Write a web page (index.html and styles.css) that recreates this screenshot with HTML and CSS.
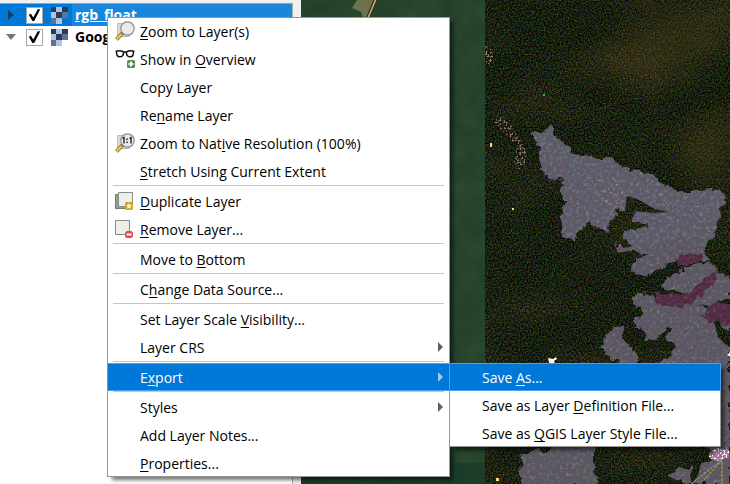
FILE: index.html
```html
<!DOCTYPE html>
<html lang="en">
<head>
<meta charset="utf-8">
<title>Layers</title>
<link rel="stylesheet" href="styles.css">
</head>
<body>
<svg class="defs" width="0" height="0" aria-hidden="true">
  <symbol id="raster" viewBox="0 0 17 17">
    <path fill="#aac4e2" d="M0 0h17v11h-6v6H0z"/>
    <path fill="#2a3c55" d="M11 0h6v5h-6zM5 5h6v6H5zM0 0h5v5H0z"/>
    <path fill="#5d7490" d="M11 5h6v6h-6zM0 11h5v6H0z"/>
  </symbol>
  <symbol id="lens" viewBox="0 0 20 20">
    <path fill="#dcdcdc" stroke="#bcbcbc" d="M2.500 2.500h12v13h-12z"/>
    <path stroke="#8a6d1d" stroke-width="4" d="M1.500 18.500l6-6.500"/>
    <path stroke="#f3c944" stroke-width="2.400" d="M1.500 18.500l5.500-6"/>
    <path stroke="#555" stroke-width="2" d="M6.500 13l2-2"/>
    <circle cx="12.500" cy="7.500" r="6.700" fill="#e9ebea" stroke="#8d8d8d" stroke-width="1.200"/>
  </symbol>
</svg>
<main class="app">
  <section class="panel" aria-label="Layers">
    <ul class="tree">
      <li class="layer selected">
        <span class="arrow closed"></span>
        <input type="checkbox" id="l1" checked>
        <svg class="thumb" aria-hidden="true"><use href="#raster"/></svg>
        <label for="l1">rgb_float</label>
      </li>
      <li class="layer">
        <span class="arrow open"></span>
        <input type="checkbox" id="l2" checked>
        <svg class="thumb" aria-hidden="true"><use href="#raster"/></svg>
        <label for="l2">Google</label>
      </li>
    </ul>
  </section>

  <svg class="map" viewBox="301 0 429 484" preserveAspectRatio="xMinYMin slice" role="img" aria-label="Satellite map">
    <defs>
      <filter id="forest" x="0" y="0" width="1" height="1" color-interpolation-filters="sRGB">
        <feTurbulence type="fractalNoise" baseFrequency=".63" numOctaves="2" seed="4"/>
        <feColorMatrix values=".45 .15 0 0 -.21  .15 .55 0 0 -.23  .1 .1 .35 0 -.215  0 0 0 0 1" result="fine"/>
        <feTurbulence type="fractalNoise" baseFrequency=".012 .02" numOctaves="3" seed="8"/>
        <feColorMatrix values=".16 0 0 0 -.07  .08 0 0 0 -.03  .04 0 0 0 -.015  0 0 0 0 1"/>
        <feComposite in2="fine" operator="arithmetic" k2="1" k3="1" result="trees"/>
        <feComposite in="trees" in2="SourceGraphic" operator="in"/>
      </filter>
      <filter id="rock" filterUnits="userSpaceOnUse" x="485" y="100" width="1400" height="1100" color-interpolation-filters="sRGB">
        <feTurbulence type="fractalNoise" baseFrequency=".13" numOctaves="3" seed="3" result="edge"/>
        <feDisplacementMap in="SourceGraphic" in2="edge" scale="10" xChannelSelector="R" yChannelSelector="G" result="shape"/>
        <feTurbulence type="fractalNoise" baseFrequency=".3" numOctaves="3" seed="12"/>
        <feColorMatrix values=".4 .1 0 0 -.26  .1 .4 0 0 -.25  .1 .1 .3 0 -.25  0 0 0 0 1" result="g"/>
        <feComposite in="shape" in2="g" operator="arithmetic" k2="1" k3="1" result="lit"/>
        <feComposite in="lit" in2="shape" operator="in"/>
      </filter>
      <filter id="speckle" x="-.1" y="-.1" width="1.200" height="1.200">
        <feTurbulence type="fractalNoise" baseFrequency=".5" numOctaves="2" seed="9"/>
        <feColorMatrix values="0 0 0 0 0  0 0 0 0 0  0 0 0 0 0  9 0 0 0 -4.600" result="dots"/>
        <feComposite in="SourceGraphic" in2="dots" operator="in"/>
      </filter>
      <filter id="soft" x="-.5" y="-.5" width="2" height="2"><feGaussianBlur stdDeviation="14"/></filter>
      <filter id="mist" x="0" y="0" width="1" height="1" color-interpolation-filters="sRGB">
        <feTurbulence type="fractalNoise" baseFrequency=".05" numOctaves="4" seed="2"/>
        <feColorMatrix values=".06 0 0 0 .12  .06 0 0 0 .235  .05 0 0 0 .15  0 0 0 0 1"/>
      </filter>
    </defs>
    <path filter="url(#mist)" d="M301 0h184v484H301z"/>
    <path fill="#17382a" opacity=".6" d="M301 463h184v21H301z"/>
    <path fill="#8a8558" opacity=".7" d="M357 0l-5 8 9 4 2 5h7l6-17z"/>
    <path fill="none" stroke="#332d18" stroke-width="4" d="M376-1l-8 19"/>
    <path fill="none" stroke="#c9b983" stroke-width="1.500" d="M376-1l-8 19"/>

    <path filter="url(#forest)" d="M485 0h1400v1200H485z"/>
    <g filter="url(#soft)" fill="#59461e" opacity=".35">
      <path d="M580 75l70-65 80-10v50l-70 30zM680 140l50-30v60l-40 15z"/>
    </g>
    <g filter="url(#speckle)" fill="#a98675">
      <path d="M485 46l6 2 3 14-6 2-3-4z"/>
      <path opacity=".8" d="M493 121l8-4 10 8 10 14 6 14-3 13-6 5-5-12 4-12-14-15z"/>
    </g>

    <g filter="url(#rock)">
      <g fill="#5c5967">
        <path transform="translate(480 0) scale(.3333)" d="M160 400l25-5 25-17 15 16 0 20 37 14 10 30 35 10 35 6 45-5 50 34 40 10 45 10 40 38 45 15 115-12 12 35-16 55-10 52-20 20 0 55-210-20-25-25-25-25 25-28 85 4-85-28-38-28-15 30-18 35-35-20-20-5-30 28-12 22-40-10 0-90 12-15-17-30 5-42-32 10-30-30 0-45z"/>
        <path d="M640 236l20-26 55-5-8 40-25 4z"/>
      </g>
      <g fill="#5a5560">
        <path d="M613 245l25 2 30-8 36-2 4 10-6 8-16 2-20 9-18 10-15-2-3-9 8-7 20-7-22 0-14 1z"/>
        <path d="M661 287l10-12 16-8 18-6 12 3 3 10 10 4v20l-16 8-24-4-8-10z"/>
        <path d="M633 296l12-4 12 5 34 0 12 10 27 8v169h-42l-22-8 18-11 26-2 5-10-28-14-40-14h-9l-10-45-10-18-13-8-4-6 5-13 6-8h12l-2 11 13 13 4 13 12 3 16-9 9-10-10-10 5-10-9 4-7 9-9-2-6-9-7-6 8-11z"/>
        <path d="M522 455l14-7 12 5 8-14 40 6-2 20 4 20h-78z"/>
      </g>
      <g fill="#502a41">
        <path transform="translate(480 242) scale(.3333)" d="M585 45l35-8 55 0-20 25-60 15zM525 150l50 5 60-5 30-35 50-35-10 40-30 30-40 40-40 5-70-8zM665 215l25-30 80 0v60l-40 5-70-25z"/>
      </g>
    </g>
    <g filter="url(#speckle)" fill="none" stroke="#b0807b" stroke-width="2">
      <path d="M594 177l12 8 12 17-9 15M588 188l12 8 10 8M607 170l18 26M612 187l8 18"/>
    </g>
    <g filter="url(#speckle)" fill="none" stroke="#9b9dad" opacity=".5">
      <path d="M540 136l28 45 22 36M546 144l34 20 30 45M565 160l40 40M580 160l48 38 55 25M605 162l50 35 55 20M640 228l60 8M615 173l60 35 40-3M650 265l50-10M668 290l40-15M650 350l60 10M690 320l35 20M550 460l30 15M560 480l20-20"/>
    </g>
    <g filter="url(#forest)">
      <path d="M627 196l10 3 18 10 14 3-16 1-17-2-5 10-8 3z"/>
      <path d="M708 240l22-3v38l-12-2-1-10-9-5-4-6z"/>
      <path d="M714 322l4 15 8 8 4 2v-16l-8-3-3-9z"/>
      <path d="M600 446h42l30 4 20 14-2 6-28-7-10 9-10 12h-42z"/>
      <path d="M697 457l12-4 0 5-8 5-3 12-6 9-2-9z"/>
    </g>
    <path fill="#fff9e8" d="M548 358l5 1 3-2 1 2-3 2 1 4h-5l-1-3z"/>
    <path fill="#ffd37b" d="M490 143h2v4h-2zM512 208h2v2h-2zM496 478h3v3h-3z"/>
    <path fill="#45b534" d="M543 94h2v2h-2z"/>
    <path fill="#d98bc8" opacity=".55" d="M709 453l8-5 12 2v7l-10 4-10-3z"/>
    <path fill="#fff" filter="url(#speckle)" d="M709 453l8-5 12 2v7l-10 4-10-3z"/>
    <path fill="none" stroke="#b7a95e" stroke-dasharray="3 1" d="M722 460l-17 13-15 12M722 460l-20 22M722 462v22"/>
    <path fill="#eee" d="M727 355l3-3v5z"/>
  </svg>

  <ul class="menu context" role="menu">
    <li><button role="menuitem"><svg class="icon" fill="none" aria-hidden="true"><use href="#lens"/></svg><span><u>Z</u>oom to Layer(s)</span></button></li>
    <li><button role="menuitem">
      <svg class="icon" viewBox="0 0 20 20" fill="none" aria-hidden="true">
        <path stroke="#111" stroke-width="1.500" d="M.500 2.500c3-1 6-.800 8 .5h3c2-1.300 5-1.500 8-.5M1.500 3c0 3 1 4.800 3.200 4.800S8.500 6 8.700 3.500M18.500 3c0 3-1 4.800-3.200 4.800S11.500 6 11.300 3.500"/>
        <rect x="12" y="11" width="8" height="8" rx="1.500" fill="#558b59"/>
        <path stroke="#fff" stroke-width="2" d="M13.500 15h5M16 12.500v5"/>
      </svg><span>Show in <u>O</u>verview</span></button></li>
    <li><button role="menuitem"><i class="icon"></i><span>Copy Layer</span></button></li>
    <li><button role="menuitem"><i class="icon"></i><span>Re<u>n</u>ame Layer</span></button></li>
    <li><button role="menuitem">
      <svg class="icon" viewBox="0 0 20 20" fill="none" aria-hidden="true">
        <use href="#lens" width="20" height="20"/>
        <path stroke="#222" stroke-width="1.400" d="M7.500 5.500L9 4.500v6M14.500 5.500l1.500-1v6"/>
        <path fill="#222" d="M11.300 5.500h1.500V7h-1.500zM11.300 8.500h1.500V10h-1.500z"/>
      </svg><span>Zoom to Nat<u>i</u>ve Resolution (100%)</span></button></li>
    <li><button role="menuitem"><i class="icon"></i><span><u>S</u>tretch Using Current Extent</span></button></li>
    <li class="sep" role="separator"></li>
    <li><button role="menuitem">
      <svg class="icon" viewBox="0 0 20 20" fill="none" aria-hidden="true">
        <path fill="#999b96" stroke="#777975" d="M.500 3.500h13v14H.500z"/>
        <path fill="#eeeeec" stroke="#888a85" d="M3.500 1.500h14v14h-14z"/>
        <rect x="10" y="11" width="8" height="8" rx="1.500" fill="#c8a72c"/>
        <path fill="#fff5b5" d="M14 12l1 2 2 .2-1.500 1.500.4 2.100-1.900-1-1.900 1 .4-2.100-1.500-1.500 2-.2z"/>
      </svg><span><u>D</u>uplicate Layer</span></button></li>
    <li><button role="menuitem">
      <svg class="icon" viewBox="0 0 20 20" fill="none" aria-hidden="true">
        <path fill="#eeeeec" stroke="#888a85" d="M.500 1.500h14v14H.500z"/>
        <rect x="10" y="12" width="8" height="7" rx="2.500" fill="#e84848"/>
        <path stroke="#fff" stroke-width="2" d="M11.500 15.500h5"/>
      </svg><span><u>R</u>emove Layer...</span></button></li>
    <li class="sep" role="separator"></li>
    <li><button role="menuitem"><i class="icon"></i><span>Move to <u>B</u>ottom</span></button></li>
    <li class="sep" role="separator"></li>
    <li><button role="menuitem"><i class="icon"></i><span>C<u>h</u>ange Data Source...</span></button></li>
    <li class="sep" role="separator"></li>
    <li><button role="menuitem"><i class="icon"></i><span>Set Layer Scale <u>V</u>isibility...</span></button></li>
    <li><button role="menuitem" class="more"><i class="icon"></i><span>Layer CRS</span></button></li>
    <li class="sep" role="separator"></li>
    <li class="parent"><button role="menuitem" class="more active"><i class="icon"></i><span>E<u>x</u>port</span></button>
      <ul class="menu sub" role="menu">
        <li><button role="menuitem" class="active"><i class="icon"></i><span>Save <u>A</u>s...</span></button></li>
        <li><button role="menuitem"><i class="icon"></i><span>Save as Layer <u>D</u>efinition File...</span></button></li>
        <li><button role="menuitem"><i class="icon"></i><span>Save as <u>Q</u>GIS Layer Style File...</span></button></li>
      </ul>
    </li>
    <li class="sep" role="separator"></li>
    <li><button role="menuitem" class="more"><i class="icon"></i><span>Styles</span></button></li>
    <li><button role="menuitem"><i class="icon"></i><span>Add Layer Notes...</span></button></li>
    <li><button role="menuitem"><i class="icon"></i><span><u>P</u>roperties...</span></button></li>
  </ul>
</main>
</body>
</html>
```
FILE: styles.css
```css
* { box-sizing: border-box; }
body {
  margin: 0;
  overflow: hidden;
  font: 14px/28px "Open Sans", "Noto Sans", sans-serif;
  color: #000;
}
ul { list-style: none; margin: 0; padding: 0; }
.defs { position: absolute; }
.app { display: flex; height: 100vh; position: relative; }

.panel {
  flex: 0 0 301px;
  padding: 3px 8px 0 0;
  background: #f0f0f0;
}
.tree {
  height: 100%;
  background: #fff;
  border-top: 1px solid #a0a0a0;
  border-right: 1px solid #b0b0b0;
}
.layer {
  display: flex;
  align-items: center;
  height: 22px;
  font-weight: 700;
  white-space: nowrap;
}
.layer label {
  flex: 1;
  margin-left: 4px;
  padding-left: 3px;
  line-height: 22px;
  overflow: hidden;
}
.selected { background: #0078d7; color: #fff; }
.selected label { background: #1a86db; text-decoration: underline; }
.arrow { width: 26px; height: 10px; display: flex; align-items: center; }
.arrow::before { content: ""; width: 10px; height: 6px; margin-left: 6px; background: #777; clip-path: polygon(0 0, 100% 0, 50% 100%); }
.arrow.closed::before { width: 6px; height: 10px; margin-left: 8px; background: #153f68; clip-path: polygon(0 0, 100% 50%, 0 100%); }
.layer input {
  appearance: none;
  width: 17px;
  height: 17px;
  margin: 0 8px 0 0;
  border: 1px solid #a8a8a8;
  background: #fff;
}
.layer input:checked::before {
  content: "";
  display: block;
  height: 15px;
  background: #000;
  clip-path: polygon(12% 48%, 26% 42%, 42% 66%, 72% 12%, 88% 12%, 48% 90%, 36% 90%);
}
.thumb { width: 17px; height: 17px; flex: none; }
.map { flex: 1; min-width: 0; height: 100%; display: block; background: #142113; }

.menu {
  position: absolute;
  background: #fff;
  box-shadow: inset 0 0 0 1px #979797, 4px 4px 4px -1px rgba(0, 0, 0, .55);
}
.context { left: 107px; top: 17px; width: 343px; }
.menu button {
  display: flex;
  align-items: center;
  width: 100%;
  height: 28px;
  padding: 0 6px 0 7px;
  border: 1px solid transparent;
  background: none;
  color: inherit;
  font: inherit;
  line-height: 24px;
  text-align: left;
  white-space: nowrap;
}
.menu button span { padding-top: 2px; }
.menu u { text-underline-offset: 2px; }
.icon { flex: none; width: 20px; height: 20px; margin-right: 5px; }
.menu .active { background: #0078d7; border-color: #42a5f5; color: #fff; }
.more::after {
  content: "";
  width: 5px;
  height: 10px;
  margin-left: auto;
  background: #606060;
  clip-path: polygon(0 0, 100% 50%, 0 100%);
}
.more.active::after { background: #9dccf3; }
.sep { height: 2px; margin: 0 6px; border-top: 1px solid #c5c5c5; }
.parent { position: relative; }
.sub { left: calc(100% - 1px); top: 0; width: 272px; }
```
